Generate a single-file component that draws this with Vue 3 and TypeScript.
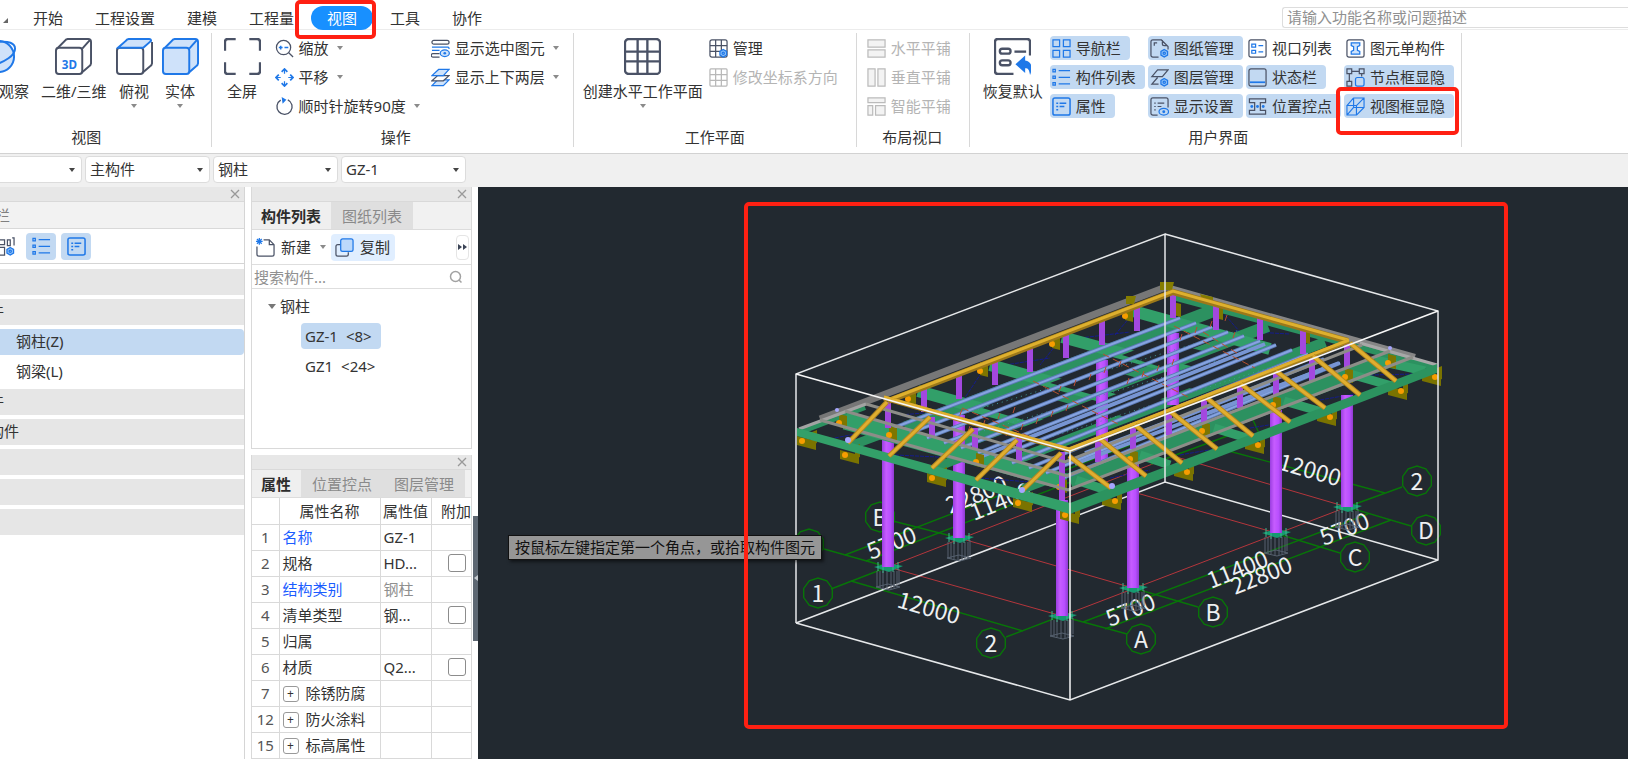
<script setup lang="ts">
import { ref } from 'vue'

interface Tool {
  icon: string
  label: string
  on?: boolean
  off?: boolean
  caret?: boolean
  marked?: boolean
}

const D = '#4a5266'
const B = '#1f78e8'
const gear = (x: number, y: number) =>
  `<path d="M${x} ${y - 4}l3.5 2v4l-3.5 2l-3.5 -2v-4z" fill="#8fc0f7" stroke="${B}"/><circle cx="${x}" cy="${y}" r="1.2" stroke="${B}"/>`

const icons: Record<string, string> = {
  zoom: `<circle cx="9" cy="9" r="7.5" stroke="${D}"/><path d="M14.5 14.5l4.5 4.5" stroke="${D}"/><path d="M4 9h4M6 7v4M10 9h4" stroke="${B}" stroke-width="1.6"/>`,
  pan: `<path d="M10 2v4M10 14v4M2 10h4M14 10h4" stroke="${B}"/><path d="M7 4l3-3 3 3M7 16l3 3 3-3M4 7l-3 3 3 3M16 7l3 3-3 3" stroke="${B}" stroke-width="1.8"/>`,
  rotate: `<path d="M13.5 3a8 8 0 1 1-7.5.3" stroke="${D}" stroke-width="1.4"/><path d="M7 0l5 3-4 4z" fill="${B}" stroke="none"/>`,
  showSel: `<rect x="1" y="1.500" width="18" height="4" rx="2" stroke="${D}"/><path d="M9 15.500h-7M9 19h-7a1.700 1.700 0 0 1 0-3.500" stroke="${D}"/><path d="M1 8.500h17a2 2 0 0 1 1 2M1 12h8" stroke="${B}"/><ellipse cx="14.500" cy="15" rx="4.800" ry="3.500" stroke="${B}" fill="#cfe3fb"/><circle cx="14.500" cy="15" r="1.400" fill="${B}"/>`,
  layers: `<path d="M7 12.500h12l-6 6h-12z" stroke="${B}" fill="#cfe3fb"/><path d="M7 8h12l-6 5.500h-12z" stroke="${D}" fill="#fff"/><path d="M8 1.500h11l-6 6.500h-12z" stroke="${B}" fill="#cfe3fb"/>`,
  gridGear: `<rect x="1" y="1" width="18" height="18" rx="2" stroke="${D}"/><path d="M1 7h18M1 13h18M7 1v18M13 1v18" stroke="${D}"/>${gear(15, 15)}`,
  gridOff: `<rect x="1" y="1" width="18" height="18" rx="1" stroke="#b8b8b8"/><path d="M1 7h18M1 13h18M7 1v18M13 1v18" stroke="#b8b8b8"/>`,
  tileH: `<path d="M1 1h18v7.500h-18zM1 11.500h18v7.500h-18z" stroke="#bbb" fill="#f3f3f3"/>`,
  tileV: `<path d="M1 1h7.500v18h-7.500zM11.500 1h7.500v18h-7.500z" stroke="#bbb" fill="#f3f3f3"/>`,
  tileS: `<path d="M1 1h18v5h-18zM1 9h5v10h-5zM9 9h10v10h-10z" stroke="#bbb" fill="#f3f3f3"/>`,
  nav: `<path d="M1 1h7v7h-7zM12 1h7v7h-7zM1 12h7v7h-7zM12 12h7v7h-7z" stroke="${B}"/>`,
  list: `<path d="M1 1.500h2.500v2.500h-2.500zM1 8.500h2.500v2.500h-2.500zM1 15.500h2.500v2.500h-2.500zM7 2.800h12M7 9.800h12M7 16.800h12" stroke="${B}"/>`,
  prop: `<rect x="1" y="1" width="18" height="18" rx="2" stroke="${B}" stroke-width="1.600"/><path d="M4.500 6.500h2M8 6.500h7M4.500 10h2M8 10h5M4.500 13.500h2" stroke="${B}" stroke-width="1.500"/>`,
  sheet: `<path d="M9 19h-6a2 2 0 0 1-2-2v-14a2 2 0 0 1 2-2h9l7 7v3M13 1v4a2 2 0 0 0 2 2h3" stroke="${D}"/><path d="M4.500 7v-3h3" stroke="${D}"/>${gear(15, 15)}`,
  layerGear: `<path d="M8 2h11l-6 7h-11zM8 10l-6 7h7" stroke="${D}"/>${gear(15, 15)}`,
  dispSet: `<path d="M8 19h-5a2 2 0 0 1-2-2v-14a2 2 0 0 1 2-2h14a2 2 0 0 1 2 2v8" stroke="${D}"/><path d="M4.500 6.500h1.500M8 6.500h7M4.500 10h1.500M8 10h4M4.500 13.500h1.500" stroke="${D}"/><ellipse cx="14.500" cy="15.500" rx="5" ry="3.500" stroke="${B}"/><circle cx="14.500" cy="15.500" r="1.500" fill="${B}"/>`,
  views: `<rect x="1" y="1" width="18" height="18" rx="2" stroke="${D}"/><path d="M4 5.500h4v3h-4zM4 12h4v3h-4zM11 7h5M11 13.500h5" stroke="${B}"/>`,
  status: `<rect x="1" y="1" width="18" height="18" rx="2" stroke="${D}"/><path d="M2 15h16" stroke="${B}" stroke-width="1.800"/>`,
  control: `<path d="M1.500 2h17v4h-5.500v8h5.500v4h-17v-4h5.500v-8h-5.500z" stroke="${D}" fill="none"/><circle cx="4" cy="10" r="1.500" fill="${B}" stroke="none"/><circle cx="10" cy="10" r="1.500" fill="${B}" stroke="none"/><circle cx="16" cy="10" r="1.500" fill="${B}" stroke="none"/>`,
  single: `<rect x="1" y="1" width="18" height="18" rx="2" stroke="${D}"/><path d="M5.500 4h9v3l-2.500 1v4l2.500 1v3h-9v-3l2.500-1v-4l-2.500-1z" stroke="${B}" fill="#cfe3fb"/>`,
  nodeBox: `<path d="M1 1h5v5h-5zM14 1h5v5h-5zM1 14h5v5h-5zM6 3.500h8M3.500 6v8M16.500 6v3" stroke="${D}"/><rect x="10" y="10" width="9" height="9" rx="2" stroke="${B}"/>`,
  viewBox: `<path d="M1 9h10v10h-10zM8 1h11v10l-8 8M1 9l7-8M11 9l8-8M8 1v10M8 11h11M1 19l7-8" stroke="${B}" stroke-width="1.200"/>`,
  arrange: `<path d="M1 3h8v5h-8zM1 11h8v8h-8zM12 3h3v6h-3zM17 1h2v8" stroke="${D}"/>${gear(15, 15)}`,
}

const tabs = ['开始', '工程设置', '建模', '工程量', '视图', '工具', '协作']
const activeTab = ref('视图')

const operateA: Tool[] = [
  { icon: 'zoom', label: '缩放', caret: true },
  { icon: 'pan', label: '平移', caret: true },
  { icon: 'rotate', label: '顺时针旋转90度', caret: true },
]
const operateB: Tool[] = [
  { icon: 'showSel', label: '显示选中图元', caret: true },
  { icon: 'layers', label: '显示上下两层', caret: true },
]
const planeTools: Tool[] = [
  { icon: 'gridGear', label: '管理' },
  { icon: 'gridOff', label: '修改坐标系方向', off: true },
]
const tileTools: Tool[] = [
  { icon: 'tileH', label: '水平平铺', off: true },
  { icon: 'tileV', label: '垂直平铺', off: true },
  { icon: 'tileS', label: '智能平铺', off: true },
]
const uiColumns: Tool[][] = [
  [
    { icon: 'nav', label: '导航栏', on: true },
    { icon: 'list', label: '构件列表', on: true },
    { icon: 'prop', label: '属性', on: true },
  ],
  [
    { icon: 'sheet', label: '图纸管理', on: true },
    { icon: 'layerGear', label: '图层管理', on: true },
    { icon: 'dispSet', label: '显示设置', on: true },
  ],
  [
    { icon: 'views', label: '视口列表' },
    { icon: 'status', label: '状态栏', on: true },
    { icon: 'control', label: '位置控点', on: true },
  ],
  [
    { icon: 'single', label: '图元单构件' },
    { icon: 'nodeBox', label: '节点框显隐', on: true },
    { icon: 'viewBox', label: '视图框显隐', on: true, marked: true },
  ],
]

const filters = [
  { name: '楼层', value: '' },
  { name: '类别', value: '主构件' },
  { name: '类型', value: '钢柱' },
  { name: '构件', value: 'GZ-1' },
]

const navRows = [
  { text: '', kind: 'cat' },
  { text: '件', kind: 'cat' },
  { text: '钢柱(Z)', kind: 'item sel' },
  { text: '钢梁(L)', kind: 'item' },
  { text: '件', kind: 'cat' },
  { text: '构件', kind: 'cat' },
  { text: '', kind: 'cat' },
  { text: '', kind: 'cat' },
  { text: '', kind: 'cat' },
]

const props = [
  { no: 1, name: '名称', value: 'GZ-1', link: true },
  { no: 2, name: '规格', value: 'HD...', check: true },
  { no: 3, name: '结构类别', value: '钢柱', link: true, dim: true },
  { no: 4, name: '清单类型', value: '钢...', check: true },
  { no: 5, name: '归属', value: '' },
  { no: 6, name: '材质', value: 'Q2...', check: true },
  { no: 7, name: '除锈防腐', value: '', group: true },
  { no: 12, name: '防火涂料', value: '', group: true },
  { no: 15, name: '标高属性', value: '', group: true },
]

type Seg = [number, number, number, number]
type Post = [number, number, number]

const gridRed: Seg[] = [
  [888, 567, 1062, 616], [959, 538, 1133, 588], [1102, 483, 1276, 533],
  [1173, 456, 1347, 507], [888, 567, 1173, 456], [1062, 616, 1347, 507],
]
const gridGreen: Seg[] = [
  [831, 589, 888, 567], [851, 581, 1023, 631], [1006, 637, 1061, 616],
  [1061, 616, 1127, 634], [1133, 588, 1198, 607], [1275, 533, 1340, 553],
  [1347, 507, 1411, 526], [1347, 507, 1402, 487], [1225, 450, 1385, 493],
  [1083, 622, 1368, 514], [1105, 629, 1391, 520], [888, 567, 824, 549],
  [959, 538, 893, 521], [845, 555, 1130, 445], [866, 561, 1151, 451],
  [1151, 464, 1230, 435], [1253, 420, 1262, 440],
]
const bubbles: [number, number, string][] = [
  [809, 544, ''], [880, 517, 'B'], [818, 593, '1'], [991, 643, '2'], [1141, 639, 'A'],
  [1213, 612, 'B'], [1355, 557, 'C'], [1426, 530, 'D'], [1417, 481, '2'],
]
const decagon = (cx: number, cy: number) =>
  Array.from({ length: 10 }, (_, i) => {
    const a = ((i * 36 + 18) * Math.PI) / 180
    return `${(cx + 15 * Math.cos(a)).toFixed(1)},${(cy + 15 * Math.sin(a)).toFixed(1)}`
  }).join(' ')

const dims: [number, number, number, string][] = [
  [896, 607, 16, '12000'], [1277, 469, 16, '12000'], [1110, 627, -22, '5700'],
  [1211, 589, -22, '11400'], [1235, 595, -22, '22800'], [1324, 546, -22, '5700'],
  [871, 560, -22, '5700'], [950, 514, -22, '22800'], [974, 521, -22, '11400'],
]

const columns: Post[] = [
  [1173, 333, 405], [1102, 360, 472], [959, 415, 538], [888, 440, 567],
  [1347, 395, 507], [1276, 410, 533], [1133, 455, 588], [1062, 500, 616],
]
const bases = columns.slice(2)

const backPosts: Post[] = [
  [888, 402, 428], [924, 387, 412], [959, 373, 399], [995, 359, 385], [1030, 345, 372],
  [1066, 332, 358], [1102, 318, 345], [1137, 304, 331], [1173, 295, 318],
  [1216, 303, 330], [1260, 316, 340], [1303, 328, 354],
]
const frontPosts: Post[] = [
  [932, 417, 438], [975, 428, 450], [1019, 438, 462], [1062, 452, 500],
  [1098, 437, 462], [1133, 423, 449], [1169, 409, 435], [1204, 397, 422],
  [1240, 383, 408], [1276, 370, 395], [1312, 355, 381], [1347, 343, 368],
]
const rafters: Seg[] = [
  [887, 402, 848, 443], [930, 417, 889, 456], [973, 429, 932, 468], [1017, 440, 976, 480],
  [1061, 453, 1022, 491], [1069, 456, 1111, 488], [1100, 439, 1146, 476],
  [1135, 425, 1182, 463], [1171, 412, 1217, 449], [1207, 398, 1253, 436],
  [1241, 384, 1290, 422], [1276, 371, 1325, 408], [1313, 356, 1360, 395], [1350, 343, 1396, 381],
]
const purlins: Seg[] = Array.from({ length: 11 }, (_, i): Seg => [
  893 + i * 17, 428 + i * 5, 1180 + i * 16, 318 + Math.round(i * 4.5),
])
const sagRods: Seg[] = [
  [962, 408, 1052, 446], [1033, 381, 1120, 425], [1103, 354, 1190, 398], [1174, 326, 1255, 368],
  [1203, 332, 1240, 355],
]
const ties: Seg[] = Array.from({ length: 24 }, (_, i): Seg => {
  const x = 960 + ((i * 53) % 280)
  const y = 415 - (x - 960) * 0.36 + ((i * 17) % 42)
  return [x, Math.round(y), x + 2, Math.round(y) - 6]
})
const purlinShades: Seg[] = [
  [1165, 424, 1270, 383], [1085, 453, 1180, 417], [1185, 422, 1325, 368], [1075, 464, 1339, 363],
]
const brackets: [number, number, number][] = [
  [910, 398, 1], [982, 370, 1], [1054, 343, 1], [1127, 315, 1], [1175, 310, 1], [1217, 313, 0], [1304, 337, 0],
  [841, 422, 1], [891, 434, 1], [978, 461, 1], [1061, 486, 1], [1132, 458, 1], [1204, 430, 1],
  [1275, 404, 1], [1347, 376, 1], [1390, 362, 1],
]
const feet: [number, number][] = [
  [805, 439], [848, 453], [935, 476], [1021, 501], [1068, 513], [1110, 499],
  [1182, 470], [1253, 443], [1325, 415], [1396, 389], [1430, 375],
]
const braces: Seg[] = [
  [900, 415, 960, 410], [990, 360, 960, 405], [1005, 365, 1050, 358], [1060, 340, 1040, 365],
  [1080, 338, 1130, 332], [1140, 305, 1115, 335], [1225, 315, 1240, 332], [1235, 331, 1290, 334],
  [825, 440, 875, 430], [895, 455, 960, 458], [980, 478, 1030, 482], [1110, 478, 1150, 470],
  [1180, 455, 1220, 448], [1250, 428, 1300, 420], [1320, 400, 1360, 393], [1370, 375, 1415, 374],
]
const greyLines = [
  '820,420 1068,490 1413,357',
  '845,411 1067,476 1390,351',
  '866,404 1065,462 1362,345',
]
</script>

<template>
  <div class="app">
    <header class="menubar">
      <span class="menu-corner"></span>
      <nav class="tabs">
        <button
          v-for="t in tabs"
          :key="t"
          type="button"
          class="tab"
          :class="{ active: t === activeTab }"
          @click="activeTab = t"
        >{{ t }}</button>
      </nav>
      <span class="tab-mark"></span>
      <input class="search" type="text" aria-label="功能搜索" placeholder="请输入功能名称或问题描述" />
    </header>

    <section class="ribbon">
      <div class="group g-view">
        <div class="body">
          <button type="button" class="big orbit">
            <svg class="i37" viewBox="0 0 38 38" fill="none" stroke="#1f78e8" stroke-width="2">
              <circle cx="19" cy="19" r="16" fill="#cfe2fa" />
              <path d="M19 4c10-1 17 1 17 7s-8 14-30 19" />
            </svg>
            <span>观察</span>
          </button>
          <button type="button" class="big">
            <svg class="i37" viewBox="0 0 38 38" fill="none" stroke="#4a5266" stroke-width="2">
              <rect x="1" y="10" width="27" height="27" rx="3" />
              <path d="M2 11l8-8a4 4 0 0 1 3-2h21a3 3 0 0 1 3 3v22a4 4 0 0 1-2 3l-8 7M28 11l8-9" />
              <text x="7" y="32" class="three-d">3D</text>
            </svg>
            <span>二维/三维</span>
          </button>
          <button type="button" class="big">
            <svg class="i37" viewBox="0 0 38 38" fill="none" stroke="#4a5266" stroke-width="2">
              <rect x="1" y="10" width="27" height="27" rx="3" />
              <path d="M37 4v22a4 4 0 0 1-2 3l-8 7" />
              <path d="M2 10l8-7a4 4 0 0 1 3-2h21a2 2 0 0 1 2 2l-8 7z" fill="#cfe2fa" stroke="#1f78e8" />
            </svg>
            <span>俯视</span><i class="caret"></i>
          </button>
          <button type="button" class="big">
            <svg class="i37" viewBox="0 0 38 38" fill="#cfe2fa" stroke="#1f78e8" stroke-width="2">
              <path d="M2 11l8-8a4 4 0 0 1 3-2h21a3 3 0 0 1 3 3v22a4 4 0 0 1-2 3l-8 7z" />
              <rect x="1" y="10" width="27" height="27" rx="3" />
              <path d="M28 11l8-9" />
            </svg>
            <span>实体</span><i class="caret"></i>
          </button>
        </div>
        <div class="glabel">视图</div>
      </div>

      <div class="group g-operate">
        <div class="body">
          <button type="button" class="big">
            <svg class="i37" viewBox="0 0 38 38" fill="none" stroke="#4a5266" stroke-width="2.400">
              <path d="M1 13v-9a3 3 0 0 1 3-3h8M26 1h8a3 3 0 0 1 3 3v9M37 25v9a3 3 0 0 1-3 3h-8M12 37h-8a3 3 0 0 1-3-3v-9" />
            </svg>
            <span>全屏</span>
          </button>
          <div class="col first">
            <button v-for="t in operateA" :key="t.label" type="button" class="small">
              <svg class="i19" viewBox="0 0 20 20" v-html="icons[t.icon]"></svg>
              <span>{{ t.label }}</span><i class="caret side"></i>
            </button>
          </div>
          <div class="col">
            <button v-for="t in operateB" :key="t.label" type="button" class="small">
              <svg class="i19" viewBox="0 0 20 20" v-html="icons[t.icon]"></svg>
              <span>{{ t.label }}</span><i class="caret side"></i>
            </button>
          </div>
        </div>
        <div class="glabel">操作</div>
      </div>

      <div class="group g-plane">
        <div class="body">
          <button type="button" class="big">
            <svg class="i37" viewBox="0 0 38 38" fill="none" stroke="#4a5266" stroke-width="2.400">
              <rect x="1" y="1" width="36" height="36" rx="4" />
              <path d="M1 14h36M1 24h36M14 1v36M24 1v36" />
            </svg>
            <span>创建水平工作平面</span><i class="caret"></i>
          </button>
          <div class="col">
            <button v-for="t in planeTools" :key="t.label" type="button" class="small" :disabled="t.off">
              <svg class="i19" viewBox="0 0 20 20" v-html="icons[t.icon]"></svg>
              <span>{{ t.label }}</span>
            </button>
          </div>
        </div>
        <div class="glabel">工作平面</div>
      </div>

      <div class="group g-tile">
        <div class="body">
          <div class="col">
            <button v-for="t in tileTools" :key="t.label" type="button" class="small" :disabled="t.off">
              <svg class="i19" viewBox="0 0 20 20" v-html="icons[t.icon]"></svg>
              <span>{{ t.label }}</span>
            </button>
          </div>
        </div>
        <div class="glabel">布局视口</div>
      </div>

      <div class="group g-ui">
        <div class="body">
          <button type="button" class="big">
            <svg class="i37" viewBox="0 0 38 38" fill="none" stroke="#4a5266" stroke-width="2.400">
              <path d="M37 18v-14a3 3 0 0 0-3-3h-30a3 3 0 0 0-3 3v30a3 3 0 0 0 3 3h16" />
              <rect x="6" y="11" width="11" height="5" rx="2.500" />
              <rect x="6" y="23" width="11" height="5" rx="2.500" />
              <path d="M21 14h12" />
              <path d="M32 18v5c7 1 8 8 5 15c-1-6-2-7-5-7v5l-10-9z" fill="#1f78e8" stroke="none" />
            </svg>
            <span>恢复默认</span>
          </button>
          <div class="ui-cols">
            <div v-for="(c, k) in uiColumns" :key="k" class="col">
              <button
                v-for="t in c"
                :key="t.label"
                type="button"
                class="small"
                :class="{ on: t.on }"
                :aria-pressed="!!t.on"
              >
                <svg class="i19" viewBox="0 0 20 20" v-html="icons[t.icon]"></svg>
                <span>{{ t.label }}</span>
                <i v-if="t.marked" class="callout"></i>
              </button>
            </div>
          </div>
        </div>
        <div class="glabel">用户界面</div>
      </div>
    </section>

    <section class="filters">
      <label v-for="f in filters" :key="f.name" class="filter">
        <select :aria-label="f.name"><option>{{ f.value }}</option></select>
        <i class="caret dark"></i>
      </label>
    </section>

    <main class="work">
      <aside class="navpanel">
        <div class="titlebar"><button type="button" class="close" aria-label="关闭">
          <svg viewBox="0 0 10 10"><path d="M1 1l8 8M9 1l-8 8" /></svg>
        </button></div>
        <div class="navhead">栏</div>
        <div class="navtools">
          <button type="button" class="navbtn plain" aria-label="布局"><svg class="i19" viewBox="0 0 20 20" v-html="icons.arrange"></svg></button>
          <button type="button" class="navbtn" aria-label="列表"><svg class="i19" viewBox="0 0 20 20" v-html="icons.list"></svg></button>
          <button type="button" class="navbtn" aria-label="属性"><svg class="i19" viewBox="0 0 20 20" v-html="icons.prop"></svg></button>
        </div>
        <ul class="navlist">
          <li v-for="(r, k) in navRows" :key="k" :class="r.kind">{{ r.text }}</li>
        </ul>
      </aside>

      <div class="middle">
        <section class="panel list-panel">
          <div class="titlebar"><button type="button" class="close" aria-label="关闭">
            <svg viewBox="0 0 10 10"><path d="M1 1l8 8M9 1l-8 8" /></svg>
          </button></div>
          <div class="ptabs">
            <button type="button" class="ptab cur">构件列表</button>
            <button type="button" class="ptab">图纸列表</button>
          </div>
          <div class="ptools">
            <button type="button" class="tbtn">
              <svg class="i19" viewBox="0 0 20 20" fill="none">
                <path d="M1 9v8a2 2 0 0 0 2 2h14a2 2 0 0 0 2-2v-10l-5-5h-6M14 2v5h5" stroke="#4a5266" stroke-width="1.300" />
                <path d="M1 1l5 5M6 1l-5 5M3.500 0v7M0 3.500h7" stroke="#1f78e8" />
              </svg>
              <span>新建</span><i class="caret side"></i>
            </button>
            <button type="button" class="tbtn copy">
              <svg class="i19" viewBox="0 0 20 20" fill="none" stroke-width="1.400">
                <path d="M6 7h-3a2 2 0 0 0-2 2v8a2 2 0 0 0 2 2h9a2 2 0 0 0 2-2v-2" stroke="#4a5266" />
                <rect x="6" y="1" width="13" height="13" rx="2" fill="#bcd9fb" stroke="#1f78e8" />
              </svg>
              <span>复制</span>
            </button>
            <button type="button" class="more" aria-label="更多">
              <svg width="9" height="6" viewBox="0 0 9 6"><path d="M0 0l4 3-4 3zM5 0l4 3-4 3z" fill="#3c4456" /></svg>
            </button>
          </div>
          <label class="psearch">
            <input type="text" placeholder="搜索构件..." aria-label="搜索构件" />
            <svg width="14" height="14" viewBox="0 0 14 14" fill="none" stroke="#a2a2a2" stroke-width="1.500"><circle cx="6.500" cy="6.500" r="5" /><path d="M10 10l2.500 2.500" /></svg>
          </label>
          <div class="tree">
            <div class="tnode"><i class="tri"></i>钢柱</div>
            <div class="tleaf picked"><span>GZ-1</span><span>&lt;8&gt;</span></div>
            <div class="tleaf"><span>GZ1</span><span>&lt;24&gt;</span></div>
          </div>
        </section>

        <section class="panel prop-panel">
          <div class="titlebar"><button type="button" class="close" aria-label="关闭">
            <svg viewBox="0 0 10 10"><path d="M1 1l8 8M9 1l-8 8" /></svg>
          </button></div>
          <div class="ptabs">
            <button type="button" class="ptab cur">属性</button>
            <button type="button" class="ptab">位置控点</button>
            <button type="button" class="ptab">图层管理</button>
          </div>
          <table>
            <colgroup><col class="c1" /><col class="c2" /><col class="c3" /><col /></colgroup>
            <thead><tr><th></th><th>属性名称</th><th>属性值</th><th class="extra">附加</th></tr></thead>
            <tbody>
              <tr v-for="p in props" :key="p.no">
                <td class="no">{{ p.no }}</td>
                <td :class="{ link: p.link }">
                  <button v-if="p.group" type="button" class="plus" aria-label="展开">+</button>{{ p.name }}
                </td>
                <td :class="{ dim: p.dim }">{{ p.value }}</td>
                <td class="chk"><input v-if="p.check" type="checkbox" :aria-label="p.name + '附加'" /></td>
              </tr>
            </tbody>
          </table>
        </section>
        <span class="splitter"></span>
      </div>

      <section class="canvas">
        <svg class="scene" viewBox="478 187 1150 572" fill="none">
          <defs>
            <linearGradient id="col" x1="0" x2="1"><stop offset="0" stop-color="#9a3ee0" /><stop offset=".35" stop-color="#c65cff" /><stop offset=".7" stop-color="#b94fff" /><stop offset="1" stop-color="#8f3bd0" /></linearGradient>
          </defs>
          <g stroke="#b4363c"><line v-for="(s, k) in gridRed" :key="k" :x1="s[0]" :y1="s[1]" :x2="s[2]" :y2="s[3]" /></g>
          <g stroke="#087508" stroke-width="1.400">
            <line v-for="(s, k) in gridGreen" :key="k" :x1="s[0]" :y1="s[1]" :x2="s[2]" :y2="s[3]" />
            <polygon v-for="(b, k) in bubbles" :key="'b' + k" :points="decagon(b[0], b[1])" />
          </g>
          <g class="cad">
            <text v-for="(b, k) in bubbles" :key="k" :x="b[0]" :y="b[1] + 9" text-anchor="middle">{{ b[2] }}</text>
            <text v-for="(d, k) in dims" :key="'d' + k" :transform="`translate(${d[0]} ${d[1]}) rotate(${d[2]})`">{{ d[3] }}</text>
          </g>
          <path d="M796 623L1165 482L1438 560" stroke="#e6e8ea" stroke-width="1.500" />

          <g v-for="(c, k) in bases" :key="'p' + k">
            <path
              :d="`M${c[0] - 11} ${c[2] + 4}v16M${c[0] - 8} ${c[2] + 4}v17M${c[0] - 5} ${c[2] + 4}v17M${c[0] - 1} ${c[2] + 4}v18M${c[0] + 3} ${c[2] + 4}v18M${c[0] + 6} ${c[2] + 4}v17M${c[0] + 9} ${c[2] + 4}v16M${c[0] + 11} ${c[2] + 2}v16M${c[0] - 12} ${c[2] + 20}l12-3 12 3-11 3z`"
              stroke="#56616f"
            />
            <path :d="`M${c[0] - 14} ${c[2]}l14-4 15 3-14 6z`" fill="#169a70" />
            <path :d="`M${c[0] - 10} ${c[2] - 5}v9M${c[0] - 5} ${c[2] - 6}v12M${c[0] + 5} ${c[2] - 6}v11M${c[0] + 10} ${c[2] - 5}v8`" stroke="#3fb58d" />
          </g>
          <g stroke="#141c8c" stroke-dasharray="4 1"><line v-for="(s, k) in braces" :key="k" :x1="s[0]" :y1="s[1]" :x2="s[2]" :y2="s[3]" /></g>

          <g stroke="#2c9160">
            <path d="M905 428L1215 310" stroke-width="13" />
            <path d="M955 446L1268 326" stroke-width="12" />
            <path d="M1020 458L1325 342" stroke-width="10" />
            <path d="M802 431L865 407" stroke-width="6" />
            <path d="M1173 297L1436 368" stroke-width="6" />
          </g>
          <g stroke="#329f69">
            <path d="M918 391L1055 429" stroke-width="12" />
            <path d="M990 365L1140 407" stroke-width="12" />
            <path d="M1062 337L1215 379" stroke-width="12" />
            <path d="M1133 311L1270 349" stroke-width="12" />
          </g>
          <g fill="#222930">
            <path d="M982 408l42-17 46 13-43 17zM1050 383l45-17 46 13-44 17zM1122 355l40-15 44 12-42 16z" />
            <path d="M1010 432l34-13 36 10-34 13zM1085 406l42-16 40 11-42 16zM1158 379l45-17 35 10-45 17z" />
          </g>
          <rect v-for="(c, k) in columns" :key="'c' + k" :x="c[0] - 6" :y="c[1]" width="12" :height="c[2] - c[1]" fill="url(#col)" />
          <g stroke="#2c9160">
            <path d="M1070 481L1388 360" stroke-width="16" />
            <path d="M850 446L885 433M937 467L975 452M1023 489L1060 475" stroke-width="9" />
          </g>
          <g stroke="#329f69">
            <path d="M845 421L1066 482" stroke-width="17" />
            <path d="M1076 480L1112 492M1140 455L1170 465M1214 428L1250 439M1284 401L1322 412M1350 374L1392 386M1375 360L1425 371" stroke-width="9" />
          </g>

          <g stroke="#3f9a9a" stroke-dasharray="1 4"><path d="M930 424L1240 330M960 438L1270 345M1010 450L1300 358" /></g>
          <g stroke="#5c7ab5" stroke-width="4"><line v-for="(s, k) in purlins" :key="k" :x1="s[0]" :y1="s[1]" :x2="s[2]" :y2="s[3]" /></g>
          <g stroke="#86a4e0" stroke-width="2"><line v-for="(s, k) in purlins" :key="k" :x1="s[0]" :y1="s[1]" :x2="s[2]" :y2="s[3]" /></g>
          <g stroke="#7795d3" stroke-width="4">
            <line v-for="(s, k) in purlinShades" :key="k" :x1="s[0]" :y1="s[1]" :x2="s[2]" :y2="s[3]" />
            <path d="M980 457L1265 344" />
          </g>
          <g stroke="#b5502f" stroke-dasharray="7 4"><line v-for="(s, k) in sagRods" :key="k" :x1="s[0]" :y1="s[1]" :x2="s[2]" :y2="s[3]" /></g>
          <g stroke="#b84a32"><line v-for="(s, k) in ties" :key="k" :x1="s[0]" :y1="s[1]" :x2="s[2]" :y2="s[3]" /></g>

          <g v-for="(b, k) in brackets" :key="'k' + k">
            <path :d="`M${b[0] - 2} ${b[1] - 8}l8 2v13l-8-2z`" fill="#7d7600" />
            <circle v-if="b[2]" :cx="b[0] - 2" :cy="b[1] + 1" r="3" fill="#f79d00" />
          </g>

          <path d="M820 419L1166 287" stroke="#777" stroke-width="7" />
          <path d="M799 429L866 404" stroke="#a3a3a3" stroke-width="3" />
          <path d="M1166 287L1415 357" stroke="#868686" stroke-width="6" />
          <path d="M1360 343L1437 365" stroke="#a8a8a8" stroke-width="3" />
          <path d="M1160 282h14l-2 8h-12zM1126 296h10l-2 8h-8zM1200 294l13 3v8l-10-3z" fill="#857d00" />
          <g fill="#a348df"><path v-for="(p, k) in backPosts" :key="k" :d="`M${p[0] - 3} ${p[1]}h6v${p[2] - p[1]}h-6z`" /></g>
          <path d="M888 401L1173 292L1348 341" stroke="#9c781a" stroke-width="6" />
          <path d="M888 400L1173 291L1348 340" stroke="#deb02e" stroke-width="3" />

          <g v-for="(f, k) in feet" :key="'f' + k">
            <path :d="`M${f[0] - 8} ${f[1] - 3}l19 5v9l-19-5zM${f[0] + 7} ${f[1] - 7}l5-2v13l-5 2z`" fill="#7a7300" />
            <circle :cx="f[0] + (f[0] > 1069 ? 5 : -3)" :cy="f[1] + 2" r="3" fill="#f79d00" />
          </g>
          <path d="M797 428L1070 503V514L797 436z" fill="#33a069" />
          <path d="M1070 503L1437 364V373L1070 514z" fill="#2c935f" />

          <g fill="#a348df"><path v-for="(p, k) in frontPosts" :key="k" :d="`M${p[0] - 3} ${p[1]}h6v${p[2] - p[1]}h-6z`" /></g>
          <path d="M884 398L1069 450L1349 341" stroke="#a8801c" stroke-width="5" />
          <path d="M884 397L1069 449L1349 340" stroke="#e0b02f" stroke-width="3" />
          <g stroke="#8d8d88" stroke-width="3"><polyline v-for="p in greyLines" :key="p" :points="p" /></g>
          <g stroke="#b5881e" stroke-width="5"><line v-for="(s, k) in rafters" :key="k" :x1="s[0]" :y1="s[1]" :x2="s[2]" :y2="s[3]" /></g>
          <g stroke="#e0ae30" stroke-width="3"><line v-for="(s, k) in rafters" :key="k" :x1="s[0]" :y1="s[1]" :x2="s[2]" :y2="s[3]" /></g>
          <g fill="#a6a6ff"><circle cx="837" cy="410" r="2" /><circle cx="848" cy="440" r="3" /><circle cx="1022" cy="490" r="3" /><circle cx="1112" cy="486" r="3" /><circle cx="1390" cy="348" r="2" /></g>

          <path d="M796 623V374L1165 234V482M1165 234L1438 311V560L1070 700L796 623" stroke="#e6e8ea" stroke-width="1.500" />
          <path d="M796 374L1070 451V700M1070 451L1438 311" stroke="#f6f6f6" stroke-width="1.500" />
        </svg>
        <div class="tip">按鼠标左键指定第一个角点，或拾取构件图元</div>
        <span class="frame"></span>
      </section>
    </main>
  </div>
</template>

<style>
html,
body {
  height: 100%;
  overflow: hidden;
}
</style>

<style scoped>
.app,
.app * {
  box-sizing: border-box;
}
.app {
  height: 100vh;
  display: flex;
  flex-direction: column;
  overflow: hidden;
  background: #fff;
  color: #333;
  font: 15px/20px 'Noto Sans', 'Noto Sans CJK SC', sans-serif;
}
button,
input,
select {
  font: inherit;
  color: inherit;
  margin: 0;
}
button {
  border: 0;
  padding: 0;
  background: none;
  white-space: nowrap;
}
.menubar {
  position: relative;
  flex: none;
  display: flex;
  align-items: flex-start;
  height: 30px;
  padding-top: 6px;
  padding-left: 3px;
  border-bottom: 1px solid #ececec;
}
.menu-corner {
  width: 0;
  height: 0;
  margin: 12px 9px 0 0;
  border-left: 5px solid transparent;
  border-bottom: 5px solid #666;
}
.tabs {
  display: flex;
}
.tab {
  height: 24px;
  padding: 0 16px;
  border-radius: 12px;
}
.tab.active {
  margin: 0 1px;
  background: #1890ff;
  color: #fff;
}
.tab-mark {
  position: absolute;
  z-index: 3;
  left: 295px;
  top: 0;
  width: 81px;
  height: 39px;
  border: 4px solid #ff2012;
  border-radius: 5px;
}
.search {
  flex: 0 0 346px;
  height: 21px;
  margin: 1px 0 0 auto;
  padding: 0 4px 2px;
  border: 1px solid #ddd;
  border-right: 0;
  border-radius: 3px 0 0 3px;
  outline: 0;
}
.search::placeholder,
.psearch input::placeholder {
  color: #909090;
  opacity: 1;
}
.ribbon {
  flex: none;
  display: flex;
  height: 124px;
  padding: 3px 0 6px;
  border-bottom: 1px solid #d2d2d2;
}
.group {
  flex: none;
  display: flex;
  flex-direction: column;
  justify-content: space-between;
  border-right: 1px solid #d8d8d8;
}
.body {
  display: flex;
  align-items: flex-start;
  padding-top: 3px;
}
.glabel {
  height: 20px;
  text-align: center;
}
.g-view {
  margin-left: -20px;
  padding-right: 12px;
}
.g-view .body {
  gap: 9px;
}
.g-view .glabel {
  padding-right: 6px;
}
.g-operate {
  padding: 0 5px 0 12px;
}
.g-plane {
  padding: 0 9px;
}
.g-tile {
  padding: 0 9px 0 8px;
}
.g-ui {
  padding: 0 7px 0 13px;
}
.big {
  display: flex;
  flex-direction: column;
  align-items: center;
  margin-top: 2px;
}
.big span {
  margin-top: 6px;
}
.orbit {
  width: 49px;
  margin-right: 3px;
  align-items: flex-start;
}
.orbit span {
  align-self: flex-end;
}
.i37 {
  display: block;
  width: 37px;
  height: 37px;
}
.i19 {
  flex: none;
  display: block;
  width: 19px;
  height: 19px;
  fill: none;
  stroke-width: 1.3;
}
.three-d {
  font: bold 12px 'Noto Sans', sans-serif;
  fill: #1f78e8;
  stroke: none;
}
.caret {
  width: 0;
  height: 0;
  margin-top: 3px;
  border: 3px solid transparent;
  border-top: 4px solid #8a8a8a;
  border-bottom: 0;
}
.caret.side {
  margin: 0 0 0 3px;
}
.caret.dark {
  border-top-color: #444;
}
.col {
  display: flex;
  flex-direction: column;
  align-items: flex-start;
  gap: 5px;
}
.col.first {
  margin-left: 12px;
}
.g-plane .col {
  margin-left: 4px;
}
.small {
  position: relative;
  display: flex;
  align-items: center;
  gap: 5px;
  height: 24px;
  padding: 0 9px 0 2px;
  border-radius: 4px;
}
.small.on {
  background: #c2d9f2;
}
.small:disabled {
  color: #b4b4b4;
}
.ui-cols {
  display: flex;
  gap: 3px;
  margin-left: 7px;
}
.callout {
  position: absolute;
  z-index: 3;
  left: -8px;
  top: -7px;
  width: 123px;
  height: 48px;
  border: 4px solid #ff2012;
  border-radius: 5px;
}
.filters {
  flex: none;
  display: flex;
  gap: 3px;
  height: 33px;
  padding-top: 2px;
  margin-left: -43px;
  background: #f0f0f0;
}
.filter {
  position: relative;
  width: 125px;
  height: 27px;
}
.filter select {
  width: 100%;
  height: 100%;
  padding: 0 4px 2px;
  appearance: none;
  background: #fff;
  border: 1px solid #dcdcdc;
  border-radius: 4px;
}
.filter .caret {
  position: absolute;
  right: 7px;
  top: 9px;
}
.work {
  flex: 1;
  min-height: 0;
  display: flex;
}
.navpanel {
  flex: none;
  width: 261px;
  margin-left: -16px;
  border-right: 1px solid #d5d5d5;
}
.titlebar {
  display: flex;
  justify-content: flex-end;
  align-items: center;
  height: 15px;
  padding-right: 4px;
  background: #e7e7e7;
  border-bottom: 1px solid #d9d9d9;
}
.close {
  width: 10px;
  height: 10px;
}
.close svg {
  display: block;
  width: 10px;
  height: 10px;
  stroke: #999;
  stroke-width: 1.3;
}
.navhead {
  height: 27px;
  padding: 3px 11px;
  color: #808080;
  background: #f2f2f2;
  border-bottom: 1px solid #d9d9d9;
}
.navtools {
  display: flex;
  gap: 5px;
  height: 35px;
  padding: 4px 0 0 12px;
  border-bottom: 1px solid #d5d5d5;
}
.navbtn {
  display: flex;
  align-items: center;
  justify-content: center;
  width: 30px;
  height: 27px;
  border-radius: 4px;
  background: #c2d9f2;
}
.navbtn.plain {
  width: 25px;
  justify-content: flex-start;
  background: none;
}
.navlist {
  display: grid;
  gap: 4px;
  margin: 0;
  padding: 5px 0;
  list-style: none;
}
.navlist li {
  height: 26px;
  padding: 2px 5px;
}
.navlist .cat {
  background: #e6e6e6;
}
.navlist .item {
  padding-left: 32px;
}
.navlist .sel {
  background: #c2d9f2;
  border-radius: 4px;
}
.middle {
  position: relative;
  flex: none;
  width: 233px;
  padding: 0 6px 0 6px;
  display: flex;
  flex-direction: column;
  gap: 6px;
}
.panel {
  border: 1px solid #d9d9d9;
  border-top: 0;
  overflow: hidden;
}
.list-panel {
  flex: 0 0 262px;
}
.prop-panel {
  flex: 1;
  min-height: 0;
}
.ptabs {
  display: flex;
  height: 28px;
  background: #f1f1f1;
  border-bottom: 1px solid #dcdcdc;
}
.ptab {
  padding: 0 11px;
  color: #8a8a8a;
  background: #dfdfdf;
}
.ptab.cur {
  padding: 0 10px 0 9px;
  color: #2c2c2c;
  font-weight: 700;
  background: #efefef;
}
.ptools {
  display: flex;
  align-items: center;
  height: 35px;
  padding: 0 2px 0 4px;
  border-bottom: 1px solid #dedede;
}
.tbtn {
  display: flex;
  align-items: center;
  gap: 6px;
  height: 27px;
}
.tbtn.copy {
  margin-left: 5px;
  padding: 0 5px 0 4px;
  border-radius: 4px;
  background: #e0eeff;
}
.more {
  display: flex;
  align-items: center;
  justify-content: center;
  width: 13px;
  height: 25px;
  margin-left: auto;
  border: 1px solid #e5e5e5;
  border-radius: 4px;
}
.psearch {
  display: flex;
  align-items: center;
  height: 24px;
  padding: 0 8px 0 2px;
  border-bottom: 1px solid #dedede;
}
.psearch input {
  flex: 1;
  min-width: 0;
  border: 0;
  padding: 0;
  outline: 0;
}
.tree {
  display: flex;
  flex-direction: column;
  align-items: flex-start;
  gap: 4px;
  padding-top: 4px;
}
.tnode,
.tleaf {
  display: flex;
  align-items: center;
  height: 26px;
}
.tnode {
  gap: 4px;
  padding-left: 16px;
}
.tri {
  border: 4px solid transparent;
  border-top: 5px solid #777;
  border-bottom: 0;
}
.tleaf {
  gap: 8px;
  margin-left: 49px;
  padding: 0 9px 0 4px;
  border-radius: 4px;
}
.tleaf.picked {
  background: #c2d9f2;
}
table {
  width: 100%;
  table-layout: fixed;
  border-collapse: collapse;
}
.c1 {
  width: 27px;
}
.c2 {
  width: 101px;
}
.c3 {
  width: 51px;
}
th,
td {
  height: 26px;
  padding: 0 3px;
  overflow: hidden;
  white-space: nowrap;
  text-align: left;
  font-weight: 400;
  border-right: 1px solid #d9d9d9;
  border-bottom: 1px solid #d9d9d9;
}
th {
  padding: 0;
  text-align: center;
}
th:last-child,
td:last-child {
  border-right: 0;
}
th.extra {
  text-align: right;
}
.no {
  padding: 0;
  text-align: center;
  color: #555;
}
.link {
  color: #1a5cff;
}
.dim {
  color: #8f8f8f;
}
.chk {
  padding: 0 0 0 16px;
}
.chk input {
  display: block;
  appearance: none;
  width: 18px;
  height: 18px;
  background: #fff;
  border: 1px solid #8c8c8c;
  border-radius: 3px;
}
.plus {
  width: 16px;
  height: 16px;
  margin: 0 7px 0 0;
  border: 1px solid #999;
  border-radius: 3px;
  font-size: 12px;
  line-height: 12px;
  vertical-align: 1px;
}
.splitter {
  position: absolute;
  right: 0;
  top: 329px;
  width: 5px;
  height: 125px;
  background: #5d6772;
}
.splitter::after {
  content: '';
  position: absolute;
  left: 1px;
  top: 59px;
  border: 3px solid transparent;
  border-left: 0;
  border-right: 4px solid #c5cad0;
}
.canvas {
  position: relative;
  flex: 1;
  min-width: 0;
  overflow: hidden;
  background: #222930;
}
.scene {
  display: block;
  width: 100%;
  height: 100%;
}
.cad {
  font: 23px 'Noto Sans CJK SC', 'Noto Sans', sans-serif;
  fill: #eef0f2;
}
.tip {
  position: absolute;
  left: 30px;
  top: 348px;
  height: 25px;
  padding: 1px 6px;
  color: #111;
  background: #969696;
  border: 1px solid #111;
  box-shadow: 2px 2px 3px rgba(0, 0, 0, 0.5);
  white-space: nowrap;
}
.frame {
  position: absolute;
  left: 266px;
  top: 15px;
  width: 764px;
  height: 527px;
  border: 4px solid #ff2012;
  border-radius: 5px;
}
</style>
